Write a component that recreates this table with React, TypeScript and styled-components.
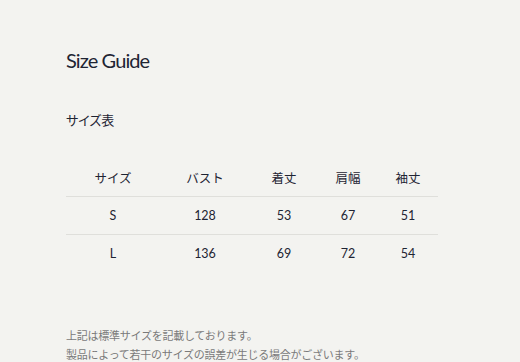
import React from 'react';
import styled, { createGlobalStyle } from 'styled-components';

const GlobalStyle = createGlobalStyle`
  html, body {
    margin: 0;
    padding: 0;
    background: #f3f3f0;
  }
  body {
    font-family: Lato, "Noto Sans CJK JP", sans-serif;
    color: #1e2433;
  }
`;

const columns = ['サイズ', 'バスト', '着丈', '肩幅', '袖丈'];
const rows = [
  ['S', '128', '53', '67', '51'],
  ['L', '136', '69', '72', '54'],
];

const Page = styled.div`
  width: 520px;
  height: 362px;
  box-sizing: border-box;
  padding: 46px 0 0 66px;
  overflow: hidden;
`;

const Title = styled.h1`
  margin: 0;
  font-size: 20px;
  font-weight: 400;
  line-height: 28px;
  letter-spacing: -0.9px;
`;

const SubTitle = styled.h2`
  margin: 36px 0 0;
  font-size: 13px;
  font-weight: 400;
  line-height: 20px;
  font-feature-settings: 'palt';
`;

const Table = styled.div`
  margin-top: 28px;
  width: 372px;
  display: grid;
  grid-template-columns: 94px 90px 68px 60px 60px;
`;

const Row = styled.div<{ $head?: boolean }>`
  display: contents;
  & > div {
    height: ${(p) => (p.$head ? '38px' : '37px')};
    border-bottom: ${(p) => (p.$head ? '1px solid #dfdfdb' : 'none')};
  }
`;

const Cell = styled.div<{ $divider?: boolean }>`
  display: flex;
  align-items: center;
  justify-content: center;
  font-size: 12.5px;
  ${(p) => (p.$divider ? 'border-bottom: 1px solid #dfdfdb !important;' : '')}
`;

const Notes = styled.div`
  margin-top: 54px;
  font-size: 11px;
  line-height: 19px;
  letter-spacing: -0.25px;
  color: #7a7a7a;
`;

export default function App() {
  return (
    <>
      <GlobalStyle />
      <Page>
        <Title>Size Guide</Title>
        <SubTitle>サイズ表</SubTitle>
        <Table>
          <Row $head>
            {columns.map((c) => (
              <Cell key={c}>{c}</Cell>
            ))}
          </Row>
          {rows.map((r, i) => (
            <Row key={i}>
              {r.map((v, j) => (
                <Cell key={j} $divider={i === 0}>
                  {v}
                </Cell>
              ))}
            </Row>
          ))}
        </Table>
        <Notes>
          <div>上記は標準サイズを記載しております。</div>
          <div>製品によって若干のサイズの誤差が生じる場合がございます。</div>
        </Notes>
      </Page>
    </>
  );
}
